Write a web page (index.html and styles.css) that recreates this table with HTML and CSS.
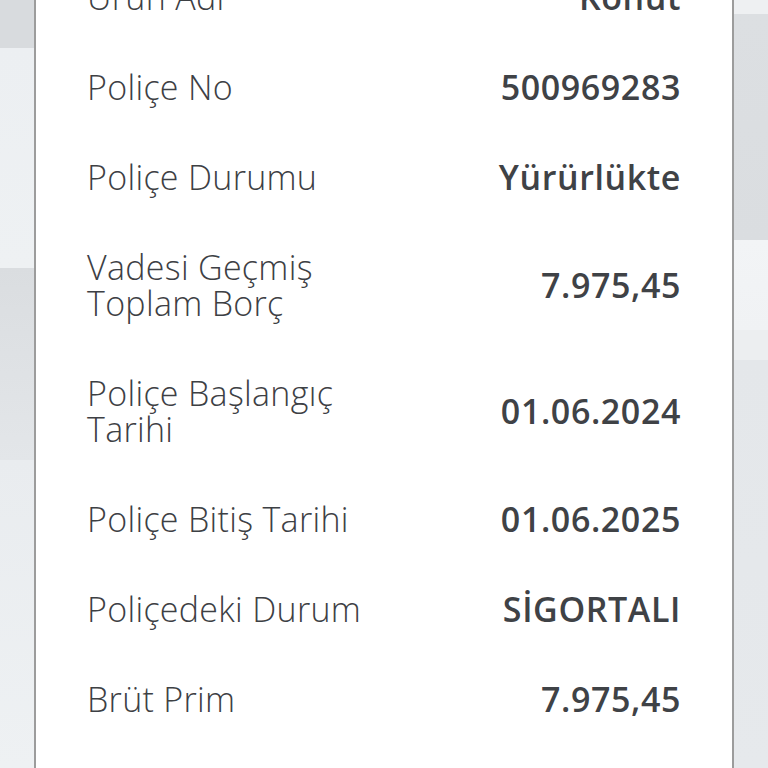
FILE: index.html
```html
<!DOCTYPE html>
<html lang="tr">
<head>
<meta charset="utf-8">
<title>Poliçe Detayı</title>
<link rel="stylesheet" href="styles.css">
</head>
<body>
<main class="page">
  <section class="card">
    <div class="row"><div class="label">Ürün Adı</div><div class="value">Konut</div></div>
    <div class="row"><div class="label">Poliçe No</div><div class="value">500969283</div></div>
    <div class="row"><div class="label">Poliçe Durumu</div><div class="value">Yürürlükte</div></div>
    <div class="row"><div class="label">Vadesi Geçmiş Toplam Borç</div><div class="value">7.975,45</div></div>
    <div class="row"><div class="label">Poliçe Başlangıç Tarihi</div><div class="value">01.06.2024</div></div>
    <div class="row"><div class="label">Poliçe Bitiş Tarihi</div><div class="value">01.06.2025</div></div>
    <div class="row"><div class="label">Poliçedeki Durum</div><div class="value">SİGORTALI</div></div>
    <div class="row"><div class="label">Brüt Prim</div><div class="value">7.975,45</div></div>
  </section>
</main>
</body>
</html>
```

FILE: styles.css
```css
html, body {
  margin: 0;
  padding: 0;
  height: 768px;
  overflow: hidden;
}

body {
  font-family: "Open Sans", "Noto Sans", sans-serif;
  color: #3c3f43;
  background:
    linear-gradient(180deg,
      #d8dbde 0, #d8dbde 48px,
      #eceff2 48px, #eef1f3 268px,
      #dadde0 268px, #e3e6e9 460px,
      #e9ecef 460px, #eef1f3 768px) left top / 34px 100% no-repeat,
    linear-gradient(180deg,
      #eef0f2 0, #eef0f2 14px,
      #dcdfe2 14px, #dadde0 240px,
      #f2f4f6 240px, #f0f2f4 330px,
      #eceef0 330px, #eceef0 360px,
      #e4e7ea 360px, #e6e9ec 768px) right top / 34px 100% no-repeat,
    #e6e9ec;
}

.page {
  padding: 0 34px;
}

.card {
  margin-top: -48px;
  background: #ffffff;
  border-left: 2px solid #9c9c9c;
  border-right: 2px solid #9c9c9c;
  padding: 0 51px 120px;
}

.row {
  display: flex;
  align-items: center;
  justify-content: space-between;
  gap: 24px;
  padding: 27px 0;
}

.label {
  width: 300px;
  font-size: 34px;
  line-height: 36px;
  font-weight: 300;
  letter-spacing: 0.3px;
  color: #3d4044;
}

.value {
  font-size: 34px;
  line-height: 36px;
  font-weight: 600;
  letter-spacing: 0.6px;
  text-align: right;
  color: #3f4246;
  white-space: nowrap;
}
```
